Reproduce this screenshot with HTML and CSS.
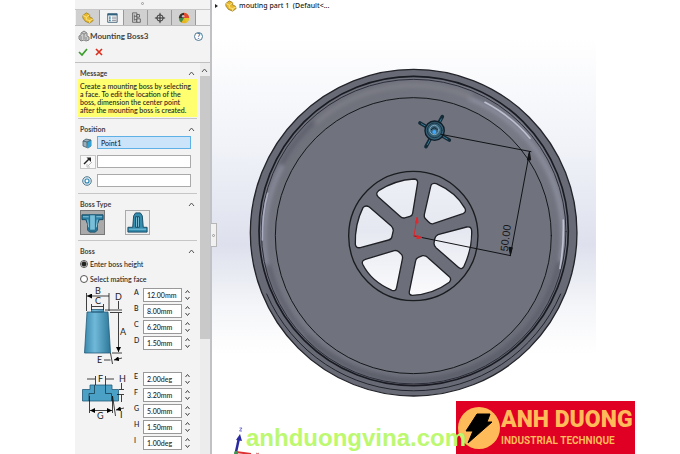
FILE: index.html
```html
<!DOCTYPE html>
<html lang="en">
<head>
<meta charset="utf-8">
<title>Mounting Boss3</title>
<link rel="stylesheet" href="styles.css">
</head>
<body>
<main class="app">
  <aside class="panel">
    <div class="grip"><i></i></div>
    <nav class="tabs">
      <button class="tab" aria-label="Feature tree"><svg viewBox="0 0 14 14"><path d="M1 4l4-3 4 2v3l3 1 1 3-4 3-5-2-3-4z" fill="#e9b92c" stroke="#8a6914" stroke-width=".7"/><path d="M1 4l4 2 4-3M5 6v3l4 1 4-2M9 10v3" fill="none" stroke="#fff0a0" stroke-width=".9"/></svg></button>
      <button class="tab active" aria-label="Properties"><svg viewBox="0 0 14 14"><path d="M2 2h11v10H2z" fill="#fff" stroke="#34566b"/><path d="M2 2h11v2H2z" fill="#2e627f"/><path d="M3.500 6h2M3.500 8h2M3.500 10h2" stroke="#2e83b5" stroke-width="1.300"/><path d="M7 6h5M7 8h5M7 10h5" stroke="#667" stroke-width=".8"/></svg></button>
      <button class="tab" aria-label="Configurations"><svg viewBox="0 0 14 14"><path d="M3 1h5v11H3zM5 3v7M5 5h3M5 9h3" fill="none" stroke="#555" stroke-width=".9"/><path d="M8 3h3v3H8zM8 8h4v4H8z" fill="#ddd" stroke="#444" stroke-width=".9"/></svg></button>
      <button class="tab" aria-label="Dimensions"><svg viewBox="0 0 14 14"><circle cx="7" cy="7" r="3.700" fill="none" stroke="#222"/><path d="M7 1v12M1 7h12" stroke="#222"/></svg></button>
      <button class="tab" aria-label="Appearance"><svg viewBox="0 0 14 14"><circle cx="7" cy="7" r="6" fill="#e8b420"/><path d="M7 7V1a6 6 0 0 1 6 6z" fill="#e24a33"/><path d="M7 7H1a6 6 0 0 1 6-6z" fill="#333"/><path d="M7 7H1a6 6 0 0 0 3 5.200z" fill="#3d8a4b"/><path d="M7 7h6a6 6 0 0 1-3 5.200z" fill="#e3c62c"/><circle cx="6" cy="5" r="1.500" fill="#fff" opacity=".7"/></svg></button>
    </nav>
    <header class="title">
      <svg class="ic" viewBox="0 0 12 12"><path d="M1 6l2-1V3l3-2 3 2v3l2 1v3l-3 1-2-1-3 1-2-2z" fill="#ccc" stroke="#777" stroke-width=".9"/><path d="M4 3l2 1 2-1M6 4v5M3 6v4M8 7v3" fill="none" stroke="#777" stroke-width=".8"/></svg>
      <h1>Mounting Boss3</h1>
      <button class="help" aria-label="Help">?</button>
    </header>
    <div class="confirm">
      <button aria-label="OK"><svg viewBox="0 0 10 10"><path d="M1 5l3 3 5-6" fill="none" stroke="#3a9d2c" stroke-width="1.700"/></svg></button>
      <button aria-label="Cancel"><svg viewBox="0 0 10 10"><path d="M2 2l6 6M8 2L2 8" stroke="#d9301f" stroke-width="1.700"/></svg></button>
    </div>
    <div class="scroll">
      <div class="groups">
        <section class="group">
          <h2>Message <svg class="chev" viewBox="0 0 7 5"><path d="M1 4l2.500-3L6 4"/></svg></h2>
          <p class="note">Create a mounting boss by selecting a face. To edit the location of the boss, dimension the center point after the mounting boss is created.</p>
        </section>
        <section class="group position">
          <h2>Position <svg class="chev" viewBox="0 0 7 5"><path d="M1 4l2.500-3L6 4"/></svg></h2>
          <label class="pick"><svg class="ic" viewBox="0 0 12 12"><path d="M2 4l3-2 5 1v6l-3 2-5-2z" fill="#9bb0bb" stroke="#445e6d" stroke-width=".8"/><path d="M6 5l4-2v6l-3 2z" fill="#34a3d4"/><path d="M2 4l4 1v5M6 5l4-2" fill="none" stroke="#3b5868" stroke-width=".8"/></svg><input class="selected" value="Point1" aria-label="Point"></label>
          <label class="pick"><span class="flip"><svg class="ic" viewBox="0 0 12 12"><path d="M2 8l5-5" stroke="#222" stroke-width="1.500"/><path d="M4.500 1.500H9V6z" fill="#222"/><path d="M10 6L6 10M5 8v3h3" fill="none" stroke="#bbb"/></svg></span><input aria-label="Direction"></label>
          <label class="pick"><svg class="ic" viewBox="0 0 12 12"><circle cx="6" cy="6" r="4.300" fill="#dce7ed" stroke="#4f7a90"/><circle cx="6" cy="6" r="2" fill="#fff" stroke="#2b86b5" stroke-width="1.100"/></svg><input aria-label="Circular edge"></label>
        </section>
        <section class="group">
          <h2>Boss Type <svg class="chev" viewBox="0 0 7 5"><path d="M1 4l2.500-3L6 4"/></svg></h2>
          <div class="types">
            <button class="type on" aria-label="Hardware boss"><svg viewBox="0 0 24 24"><path d="M1 4h22v5h-4l-2 5v6l-2 2H9l-2-2v-6L5 9H1z" fill="#2d7fa3" stroke="#184b63"/><path d="M9 4h6v16H9z" fill="#79bfda" stroke="#1e5873" stroke-width=".8"/><path d="M2 6h6M16 6h6M7 9l1 8M17 9l-1 8" stroke="#8dcbe0"/></svg></button>
            <button class="type" aria-label="Pin boss"><svg viewBox="0 0 24 24"><path d="M2 17h5L8 5l2-3h5l2 3 1 12h4v5H2z" fill="#348caf" stroke="#184b63"/><path d="M10 6h4v11h-4zM12 6v11" fill="#80c4dc" stroke="#174a61"/><path d="M3 19h18" stroke="#82c8e0"/></svg></button>
          </div>
        </section>
        <section class="group boss">
          <h2>Boss <svg class="chev" viewBox="0 0 7 5"><path d="M1 4l2.500-3L6 4"/></svg></h2>
          <label class="radio"><input type="radio" name="mode" checked>Enter boss height</label>
          <label class="radio"><input type="radio" name="mode">Select mating face</label>
          <div class="dims">
            <svg class="diagram" viewBox="80 287 50 140">
              <defs>
                <linearGradient id="metal"><stop offset="0" stop-color="#3a89ad"/><stop offset=".4" stop-color="#71b9d9"/><stop offset="1" stop-color="#2c7799"/></linearGradient>
                <marker id="arr" viewBox="0 0 6 6" refX="6" refY="3" markerWidth="5" markerHeight="5" markerUnits="userSpaceOnUse" orient="auto-start-reverse"><path d="M0 0l6 3-6 3z"/></marker>
              </defs>
              <path d="M91.500 313v-2.500h12V313zM87 313h21l2.500 41h-26z" fill="url(#metal)" stroke="#235b78" stroke-width=".8"/>
              <g class="ln">
                <path d="M86.500 294v18M109 294v18M91.500 305v6M103.500 305v6M105 311h17M110 313.500h12M112 354h10M110.500 354l2 11"/>
                <path class="both" d="M87 297h22M92 307.500h11M118.500 314v39"/>
                <path class="end" d="M118.500 302v8M104 361h6.500M122 359l-8 2"/>
              </g>
              <path d="M82.500 402v-11.500H90V386h22v4.500h6.500V402z" fill="#4ba1c5" stroke="#235b78" stroke-width=".8"/>
              <path d="M89 402v-7.500h5.500V386M105.500 386v8.500h6V402" fill="none" stroke="#183d50" stroke-width=".8"/>
              <g class="ln">
                <path d="M95.500 377v9M105.500 377v9M89.500 397v17M112.500 397v17M119 390.500h5M117 395.500h7M112.500 397l3 20"/>
                <path class="both" d="M90 411.500h22"/>
                <path class="end" d="M87 380h8M114 380h-8M121.500 384v6M121.500 403v-7M124 409l-8 2"/>
              </g>
              <g class="mark"><text x="95" y="295">B</text><text x="95" y="305">C</text><text x="115" y="301">D</text><text x="120" y="336">A</text><text x="97" y="364">E</text><text x="98" y="383">F</text><text x="119" y="383">H</text><text x="97" y="420">G</text><text x="120" y="419">I</text></g>
            </svg>
            <div class="fields">
              <label class="field">A<input value="12.00mm"><svg class="spin" viewBox="0 0 7 12"><path d="M1.500 4l2-2.500 2 2.500M1.500 8l2 2.500 2-2.500"/></svg></label>
              <label class="field">B<input value="8.00mm"><svg class="spin" viewBox="0 0 7 12"><path d="M1.500 4l2-2.500 2 2.500M1.500 8l2 2.500 2-2.500"/></svg></label>
              <label class="field">C<input value="6.20mm"><svg class="spin" viewBox="0 0 7 12"><path d="M1.500 4l2-2.500 2 2.500M1.500 8l2 2.500 2-2.500"/></svg></label>
              <label class="field last">D<input value="1.50mm"><svg class="spin" viewBox="0 0 7 12"><path d="M1.500 4l2-2.500 2 2.500M1.500 8l2 2.500 2-2.500"/></svg></label>
              <label class="field">E<input value="2.00deg"><svg class="spin" viewBox="0 0 7 12"><path d="M1.500 4l2-2.500 2 2.500M1.500 8l2 2.500 2-2.500"/></svg></label>
              <label class="field">F<input value="3.20mm"><svg class="spin" viewBox="0 0 7 12"><path d="M1.500 4l2-2.500 2 2.500M1.500 8l2 2.500 2-2.500"/></svg></label>
              <label class="field">G<input value="5.00mm"><svg class="spin" viewBox="0 0 7 12"><path d="M1.500 4l2-2.500 2 2.500M1.500 8l2 2.500 2-2.500"/></svg></label>
              <label class="field">H<input value="1.50mm"><svg class="spin" viewBox="0 0 7 12"><path d="M1.500 4l2-2.500 2 2.500M1.500 8l2 2.500 2-2.500"/></svg></label>
              <label class="field">I<input value="1.00deg"><svg class="spin" viewBox="0 0 7 12"><path d="M1.500 4l2-2.500 2 2.500M1.500 8l2 2.500 2-2.500"/></svg></label>
            </div>
          </div>
        </section>
      </div>
      <div class="bar"><svg class="chev" viewBox="0 0 7 5"><path d="M1 4l2.500-3L6 4"/></svg><div class="thumb"></div></div>
    </div>
  </aside>
  <section class="view">
    <svg class="model" viewBox="212 0 384 454">
      <defs>
        <linearGradient id="glass" gradientUnits="userSpaceOnUse" x1="0" y1="340" x2="0" y2="720"><stop offset="0" stop-color="#eef0f6"/><stop offset=".45" stop-color="#e6e8f1"/><stop offset="1" stop-color="#fcfcfd"/></linearGradient>
        <linearGradient id="rim" x1="0" y1="0" x2="1" y2="1"><stop offset="0" stop-color="#6b6d76"/><stop offset=".5" stop-color="#777985"/><stop offset="1" stop-color="#666973"/></linearGradient>
        <filter id="soft" x="-20%" y="-20%" width="140%" height="140%"><feGaussianBlur stdDeviation="6"/></filter>
        <filter id="glow" x="-20%" y="-20%" width="140%" height="140%"><feGaussianBlur stdDeviation="2"/></filter>
      </defs>
      <g transform="translate(240 60) scale(.3333)" stroke-linejoin="round" stroke-linecap="round">
        <circle cx="521" cy="518" r="490" fill="#686b75" stroke="#23242a" stroke-width="4"/>
        <path d="M80 702A480 480 0 0 0 962 702" fill="none" stroke="#22242c" stroke-width="3"/>
        <circle cx="521" cy="513" r="464" fill="url(#rim)"/>
        <g fill="none" filter="url(#soft)">
          <circle cx="521" cy="516" r="446" stroke="#595b68" stroke-width="10"/>
          <path d="M690 115A440 440 0 0 1 963 600" stroke="#9092a2" stroke-width="13"/>
          <path d="M125 320A440 440 0 0 0 80 610" stroke="#8d8fa0" stroke-width="12"/>
          <path d="M203 831A450 450 0 0 0 839 831" stroke="#5c5e69" stroke-width="18"/>
          <path d="M230 185A442 442 0 0 1 690 108" stroke="#7f8089" stroke-width="14"/>
        </g>
        <circle cx="521" cy="513" r="464" fill="none" stroke="#191a22" stroke-width="5"/>
        <circle cx="521" cy="515" r="457" fill="none" stroke="#2b2d38" stroke-width="3"/>
        <g fill="none" stroke="#d4d6e6" stroke-width="5" opacity=".75" filter="url(#glow)"><path d="M735 127A445 445 0 0 1 870 235M970 480Q972 560 960 625"/><path d="M83 400Q66 460 67 540" stroke="#b9bdd0"/></g>
        <circle cx="520" cy="527" r="414" fill="#70737d" stroke="#16171b" stroke-width="3"/>
        <circle cx="520" cy="528" r="194" fill="#6c6f79" stroke="#1b1c20" stroke-width="4"/>
        <g fill="url(#glass)" stroke="#202126" stroke-width="4">
          <path d="M416 392Q466 360 522 357Q533 357 533 368L518 460Q517 467 510 469L494 474Q486 475 480 469L415 411Q405 401 416 392Z"/>
          <path d="M572 380Q574 367 589 371Q648 397 675 445Q680 456 669 461L580 491Q572 493 566 486L555 475Q552 471 553 464Z"/>
          <path d="M594 524L680 501Q694 498 695 512Q697 565 672 619Q665 631 655 622L588 563Q582 557 582 550L584 537Q586 528 594 524Z"/>
          <path d="M527 602Q528 595 535 592L548 587Q557 586 564 593L628 650Q636 658 628 667Q578 704 517 706Q506 705 508 695Z"/>
          <path d="M463 572Q471 570 477 576L485 584Q489 589 487 598L470 682Q468 695 456 691Q394 665 368 613Q364 602 376 598Z"/>
          <path d="M369 443Q377 434 388 441L453 497Q459 503 460 511L456 529Q455 538 446 540L361 563Q348 565 346 553Q344 493 369 443Z"/>
        </g>
        <g stroke="#142b39" stroke-width="11"><path d="M540 189l88 51M607 170l-49 90"/></g>
        <g stroke="#3b7691" stroke-width="3"><path d="M544 191l78 46M604 177l-42 77"/></g>
        <circle cx="584" cy="212" r="29" fill="#355f75" stroke="#101e29" stroke-width="4"/>
        <circle cx="584" cy="211" r="22" fill="none" stroke="#1b3646" stroke-width="3"/>
        <circle cx="583" cy="210" r="14" fill="#3b6278" stroke="#7fa9bd" stroke-width="3"/>
        <path d="M574 209q9-12 18 0" fill="none" stroke="#10212d" stroke-width="3"/>
        <circle cx="583" cy="216" r="6" fill="#40a9ff"/>
        <g fill="none" stroke="#111216" stroke-width="3"><path d="M603 223L873 275M869 275L811 587M523 528L812 587"/><path d="M868 277l-6 23h9zM811 583l-4-21 9 1z" fill="#111216"/></g>
        <g fill="#e6252b" stroke="#e6252b" stroke-width="3"><path d="M522 528l9-55M527 487l5-15 2 16zM522 528h12M532 527l13 6-13 3z"/></g>
        <text x="803" y="575" transform="rotate(-83 803 575)" class="length">50.00</text>
      </g>
      <path d="M236 452l3-14" stroke="#2929a1" stroke-width="2.500"/><path d="M236 440l4-6 2 7z" fill="#2929a1"/><path d="M236 452l15 2" stroke="#d33" stroke-width="2"/><circle cx="236" cy="453" r="2" fill="#3e9455"/><path d="M239.500 428h2.500l-2.500 3h2.500" fill="none" stroke="#55c" stroke-width=".8"/><path d="M256 453l3 2M259 453l-3 2" stroke="#c44" stroke-width=".8"/>
    </svg>
    <div class="tree"><span class="tri"></span><svg class="ic" viewBox="0 0 14 14"><path d="M1 4l4-3 4 2v3l3 1 1 3-4 3-5-2-3-4z" fill="#e9b92c" stroke="#8a6914" stroke-width=".8"/><path d="M1 4l4 2 4-3M5 6v3l4 1 4-2M9 10v3" fill="none" stroke="#fff0a0" stroke-width=".9"/></svg><span class="name">mouting part 1 &nbsp;(Default&lt;...</span></div>
    <button class="handle" aria-label="Collapse panel"><i></i></button>
    <div class="badge">
      <svg class="bolt" viewBox="0 0 42 42"><circle cx="21" cy="21" r="21" fill="#ffba59"/><path d="M19 7h13l-3 8h5L10 36l5-12H8z" stroke="#000" stroke-linejoin="round"/></svg>
      <div><strong>ANH DUONG</strong><span>INDUSTRIAL TECHNIQUE</span></div>
    </div>
    <div class="watermark">anhduongvina.com</div>
  </section>
</main>
</body>
</html>
```
FILE: styles.css
```css
* { box-sizing: border-box; }
body { margin: 0; background: #fff; color: #222; font: 500 7px/8px Lato, "Open Sans", sans-serif; }
button, input { margin: 0; padding: 0; border: 0; background: none; color: inherit; font: inherit; }
svg { display: block; }
h1, h2, p { margin: 0; }
.app { display: flex; height: 100vh; padding: 0 84px 0 75px; overflow: hidden; }
.panel { flex: 0 0 137px; display: flex; flex-direction: column; overflow: hidden; background: #f3f3f3; border-right: 2px solid #bfc1c4; }
.grip { flex: 0 0 10px; display: flex; justify-content: center; padding-top: 2px; border-bottom: 1px solid #c8c8c8; }
.grip i, .handle i { width: 3px; height: 3px; border: 1px solid #999; border-radius: 50%; }
.tabs { flex: 0 0 16px; display: flex; padding-left: 1px; border-bottom: 1px solid #bbb; }
.tab { width: 24px; display: grid; place-items: center; background: #d0d0d0; border-right: 1px solid #999; }
.tab.active { background: #f3f3f3; }
.tab svg { width: 12px; height: 12px; }
.ic { flex: none; width: 12px; height: 12px; }
.title { flex: 0 0 20px; display: flex; align-items: center; padding: 0 7px 0 3px; }
.title h1 { flex: 1; font-size: 8px; font-weight: 700; color: #444; }
.help { width: 9px; height: 9px; border: 1px solid #4d7893; border-radius: 50%; background: #fff; color: #1f6696; line-height: 7px; font-weight: 700; }
.confirm { flex: 0 0 17px; display: flex; align-items: flex-start; gap: 6px; padding: 1px 3px; border-bottom: 1px solid #c0c0c0; }
.confirm svg { width: 10px; height: 10px; }
.scroll { flex: 1; display: flex; min-height: 0; padding-left: 3px; }
.groups { flex: 1; min-width: 0; margin-right: 3px; }
.group { border-top: 1px solid #c6c6c6; padding: 4px 2px 5px; }
.group:first-child { border-top: 0; padding-bottom: 1px; }
.group h2 { display: flex; justify-content: space-between; align-items: center; height: 12px; font-size: 7px; font-weight: 700; color: #444; }
.chev { width: 7px; height: 5px; fill: none; stroke: #555; stroke-width: 1; }
.note { margin: 0 -2px; padding: 3px 2px; background: #ffff70; }
.position h2 { margin-bottom: 1px; }
.pick { display: flex; justify-content: space-between; align-items: center; height: 13px; margin-bottom: 6px; padding-right: 4px; }
.pick > .ic { margin-left: 1px; }
.pick input { width: 94px; height: 13px; padding: 0 3px; background: #fff; border: 1px solid #aaa; }
.pick input.selected { background: #cce4fa; border-color: #5eb1e7; }
.flip { padding: 0 1px; border: 1px solid #c6c6c6; background: #f9f9f9; }
.position .pick:last-child { margin-bottom: 1px; }
.types { display: flex; gap: 20px; }
.type { width: 25px; height: 25px; border: 1px solid #aaa; background: #eee; }
.type.on { background: #aaa; border-color: #777; }
.type svg { width: 23px; height: 23px; }
.radio { display: flex; align-items: center; gap: 2px; height: 15px; }
.boss h2 { margin-bottom: -1px; }
.radio input { appearance: none; width: 8px; height: 8px; border: 1px solid #555; border-radius: 50%; background: #fff; }
.radio input:checked { background: radial-gradient(circle, #222 0 2px, #fff 3px); }
.dims { display: flex; gap: 4px; }
.diagram { flex: none; width: 50px; height: 140px; }
.ln { fill: none; stroke: #111; stroke-width: .8; }
.both { marker-start: url(#arr); marker-end: url(#arr); }
.end { marker-end: url(#arr); }
.mark { font: 9px Lato, sans-serif; fill: #222; }
.fields { padding-top: 2px; }
.field { display: flex; align-items: flex-start; height: 16px; width: 48px; }
.field.last { margin-bottom: 20px; }
.field input { width: 39px; height: 14px; margin-left: auto; padding: 0 3px; border: 1px solid #999; background: #fff; }
.spin { flex: none; width: 7px; height: 12px; margin: 1px -9px 0 2px; fill: none; stroke: #444; stroke-width: 1; }
.bar { flex: 0 0 10px; background: #ececec; }
.bar .chev { margin: 5px 1px 3px; }
.thumb { height: 263px; background: #c9c9c9; }
.view { position: relative; flex: 1; min-width: 0; background: linear-gradient(#fff 8%, #f0f2f8 33%, #dee1ed 54%, #f5f6f9 68%, #fff 78%); }
.model { width: 100%; height: 100%; }
.length { font: 32px "Liberation Sans", sans-serif; fill: #16171b; }
.tree { position: absolute; top: 0; left: 3px; display: flex; align-items: center; height: 12px; font-family: "Noto Sans", sans-serif; }
.tri { margin-right: 7px; border: 2px solid transparent; border-left: 3px solid #222; border-right: 0; }
.name { margin-left: 2px; white-space: nowrap; }
.handle { position: absolute; top: 223px; left: -1px; width: 6px; height: 24px; display: grid; place-items: center; background: #f1f1f1; border: 1px solid #b5b5b5; border-left: 0; }
.badge { position: absolute; right: -39px; bottom: 0; width: 179px; height: 53px; padding: 6px 0 0 2px; display: flex; gap: 1px; background: #df0024; color: #ffba59; font-family: Roboto, "Liberation Sans", sans-serif; font-weight: 900; }
.bolt { flex: none; width: 42px; height: 42px; }
.badge strong { display: block; font-size: 23px; font-weight: 900; line-height: 26px; white-space: nowrap; }
.badge span { display: block; font-size: 10px; font-weight: 700; line-height: 16px; white-space: nowrap; }
.watermark { position: absolute; left: 34px; bottom: 0; color: #bdf871; font: 700 24px/32px "Liberation Sans", sans-serif; }
```
